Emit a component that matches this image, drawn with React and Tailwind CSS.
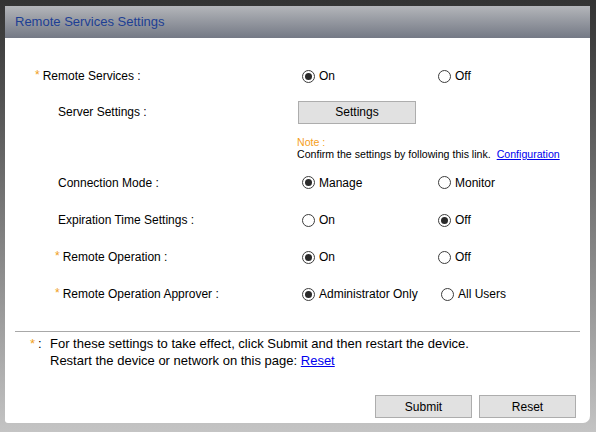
import React, { useState } from "react";

const font = { fontFamily: "'Liberation Sans', Arial, sans-serif" };

// round option button drawn like the device's web UI
const Radio = ({ checked, label, onClick }) => (
  <button
    type="button"
    onClick={onClick}
    className="flex items-center gap-[4px] text-[12px] text-black"
  >
    <span className="flex items-center justify-center w-[13px] h-[13px] rounded-full border border-[#3c3c3c] bg-white">
      {checked && <span className="w-[7px] h-[7px] rounded-full bg-[#2a2a2a]" />}
    </span>
    <span>{label}</span>
  </button>
);

const Label = ({ required, indent, children }) => (
  <div
    className={`flex items-center text-[12px] text-black ${
      indent === 2 ? "pl-[53px]" : indent === 1 ? "pl-[50px]" : "pl-[30px]"
    }`}
  >
    {required && <span className="text-[#f0a020] mr-[3px] -mt-[3px]">*</span>}
    <span>{children}</span>
  </div>
);

const OptionRow = ({ label, required, indent, value, onChange, options, h, secondCol }) => (
  <div className={`grid grid-cols-[297px_1fr] items-center ${h}`}>
    <Label required={required} indent={indent}>
      {label}
    </Label>
    <div className="flex items-center">
      <div className={secondCol || "w-[136px]"}>
        <Radio
          checked={value === options[0]}
          label={options[0]}
          onClick={() => onChange(options[0])}
        />
      </div>
      <Radio
        checked={value === options[1]}
        label={options[1]}
        onClick={() => onChange(options[1])}
      />
    </div>
  </div>
);

const App = () => {
  const [remote, setRemote] = useState("On");
  const [mode, setMode] = useState("Manage");
  const [expire, setExpire] = useState("Off");
  const [operation, setOperation] = useState("On");
  const [approver, setApprover] = useState("Administrator Only");

  return (
    <div
      style={font}
      className="w-[596px] h-[432px] bg-gradient-to-b from-[#333333] via-[#7a7a7a] to-[#c4c4c4] pt-[6px] pl-[5px]"
    >
      <div className="w-[585px] h-[417px] bg-white rounded-bl-[3px] rounded-br-[7px] flex flex-col">
        {/* title bar */}
        <div className="h-[32px] bg-gradient-to-b from-[#b4b6ba] to-[#747985] flex items-center pl-[10px]">
          <h1 className="text-[13px] text-[#1d3f94]">Remote Services Settings</h1>
        </div>

        <div className="pt-[20px]">
          <OptionRow
            label="Remote Services :"
            required
            value={remote}
            onChange={setRemote}
            options={["On", "Off"]}
            h="h-[36px]"
          />

          <div className="grid grid-cols-[293px_1fr] items-center h-[36px]">
            <Label indent={2}>Server Settings :</Label>
            <button className="w-[118px] h-[23px] bg-[#e1e1e1] border border-[#adadad] text-[12px] text-black">
              Settings
            </button>
          </div>

          <div className="pl-[292px] h-[34px] pt-[6px] text-[10.6px] leading-[12px]">
            <div className="text-[#f5a020]">Note :</div>
            <div className="text-black">
              Confirm the settings by following this link.{" "}
              <a href="#" className="text-[#0000ee] underline ml-[3px]">
                Configuration
              </a>
            </div>
          </div>

          <OptionRow
            label="Connection Mode :"
            indent={2}
            value={mode}
            onChange={setMode}
            options={["Manage", "Monitor"]}
            h="h-[37px]"
          />
          <OptionRow
            label="Expiration Time Settings :"
            indent={2}
            value={expire}
            onChange={setExpire}
            options={["On", "Off"]}
            h="h-[38px]"
          />
          <OptionRow
            label="Remote Operation :"
            required
            indent={1}
            value={operation}
            onChange={setOperation}
            options={["On", "Off"]}
            h="h-[36px]"
          />
          <OptionRow
            label="Remote Operation Approver :"
            required
            indent={1}
            value={approver}
            onChange={setApprover}
            options={["Administrator Only", "All Users"]}
            h="h-[38px]"
            secondCol="w-[139px]"
          />
        </div>

        <div className="mx-[10px] mt-[18px] border-t border-[#a8a8a8]" />

        <div className="flex pl-[25px] pt-[3px] text-[13px] leading-[17px] text-black">
          <span className="text-[#f0a020] w-[8px]">*</span>
          <span className="w-[12px]">:</span>
          <div>
            <div>For these settings to take effect, click Submit and then restart the device.</div>
            <div>
              Restart the device or network on this page:{" "}
              <a href="#" className="text-[#0000ee] underline">
                Reset
              </a>
            </div>
          </div>
        </div>

        <div className="mt-auto mb-[5px] flex justify-end gap-[7px] pr-[14px]">
          <button className="w-[97px] h-[23px] bg-[#e1e1e1] border border-[#adadad] text-[12px] text-black">
            Submit
          </button>
          <button className="w-[97px] h-[23px] bg-[#e1e1e1] border border-[#adadad] text-[12px] text-black">
            Reset
          </button>
        </div>
      </div>
    </div>
  );
};

export default App;
